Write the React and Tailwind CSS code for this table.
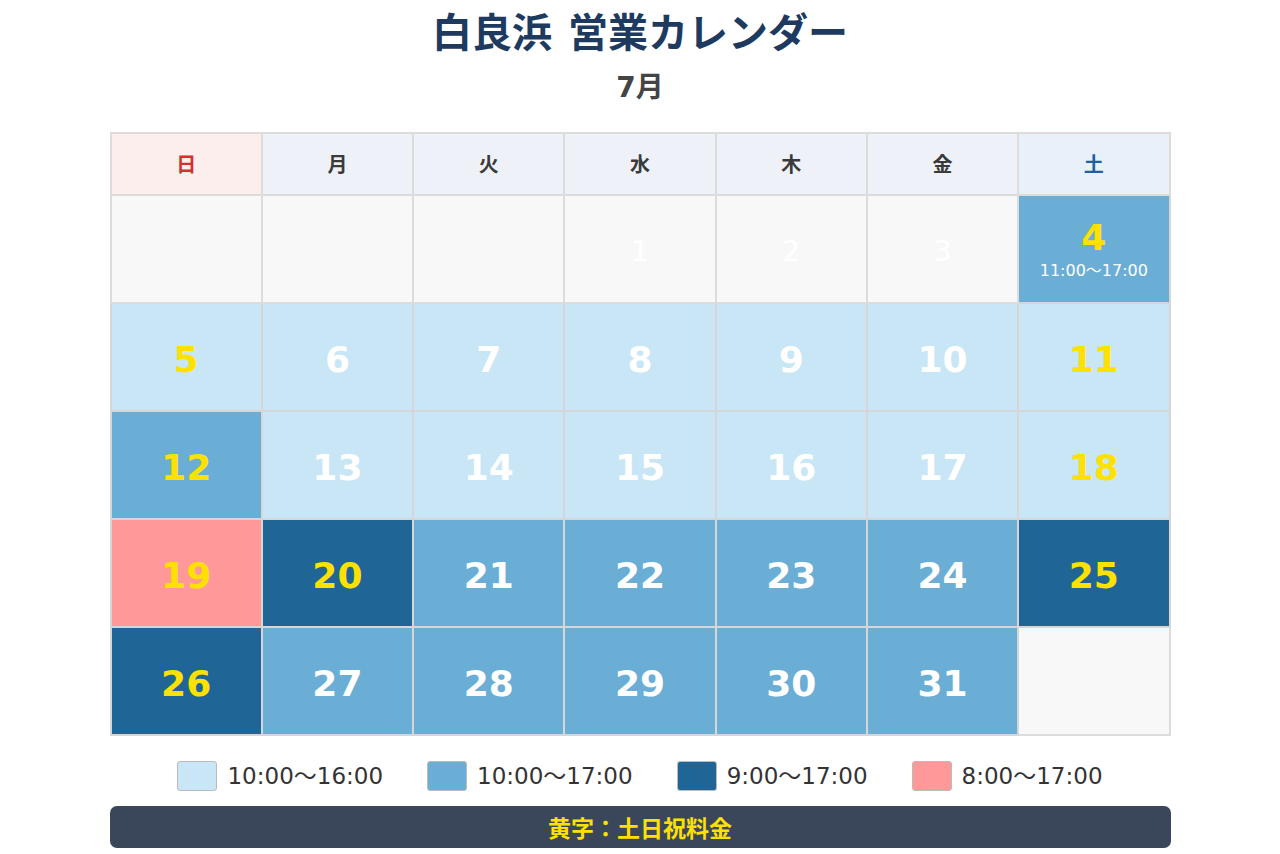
const days = [
  { label: "日", cls: "bg-[#fdeeee] text-[#d0312d]" },
  { label: "月", cls: "bg-[#eef2f8] text-[#3a3a3a]" },
  { label: "火", cls: "bg-[#eef2f8] text-[#3a3a3a]" },
  { label: "水", cls: "bg-[#eef2f8] text-[#3a3a3a]" },
  { label: "木", cls: "bg-[#eef2f8] text-[#3a3a3a]" },
  { label: "金", cls: "bg-[#eef2f8] text-[#3a3a3a]" },
  { label: "土", cls: "bg-[#e8f0fa] text-[#1f5fa6]" },
];

const bg = {
  e: "bg-[#f8f8f8]",
  l: "bg-[#c9e6f6]",
  m: "bg-[#6aaed6]",
  d: "bg-[#1f6696]",
  p: "bg-[#ff9999]",
};

// [day, type, yellow, note]
const weeks = [
  [[null, "e"], [null, "e"], [null, "e"], [1, "e"], [2, "e"], [3, "e"], [4, "m", true, "11:00〜17:00"]],
  [[5, "l", true], [6, "l"], [7, "l"], [8, "l"], [9, "l"], [10, "l"], [11, "l", true]],
  [[12, "m", true], [13, "l"], [14, "l"], [15, "l"], [16, "l"], [17, "l"], [18, "l", true]],
  [[19, "p", true], [20, "d", true], [21, "m"], [22, "m"], [23, "m"], [24, "m"], [25, "d", true]],
  [[26, "d", true], [27, "m"], [28, "m"], [29, "m"], [30, "m"], [31, "m"], [null, "e"]],
];

const legend = [
  { sw: "bg-[#c9e6f6]", text: "10:00〜16:00" },
  { sw: "bg-[#6aaed6]", text: "10:00〜17:00" },
  { sw: "bg-[#1f6696]", text: "9:00〜17:00" },
  { sw: "bg-[#ff9999]", text: "8:00〜17:00" },
];

function Cell({ cell }) {
  const [n, type, yellow, note] = cell;
  if (type === "e") {
    return (
      <td className={`${bg.e} border-2 border-[#dcdcdc] h-[108px] pt-[6px] text-center align-middle`}>
        {n && <span className="text-[28px] text-white">{n}</span>}
      </td>
    );
  }
  return (
    <td className={`${bg[type]} border-2 border-[#d6d6d6] h-[108px] pt-[5px] text-center align-middle`}>
      <div className={`font-bold text-[36px] leading-[40px] ${yellow ? "text-[#ffe100]" : "text-white"} ${note ? "-mt-[6px]" : ""}`}>
        {n}
      </div>
      {note && <div className="text-[16px] leading-[18px] text-white mt-[4px]">{note}</div>}
    </td>
  );
}

export default function App() {
  return (
    <div className="w-[1280px] h-[854px] bg-white pt-[6px] font-['DejaVu_Sans','Noto_Sans_CJK_JP',sans-serif]">
      <h1 className="text-center text-[40px] leading-[48px] font-bold text-[#1e3a5f] [word-spacing:7px] font-['Noto_Sans_CJK_JP',sans-serif]">
        白良浜 営業カレンダー
      </h1>
      <h2 className="text-center text-[28px] leading-[36px] mt-[16px] font-bold text-[#444]">
        7月
      </h2>
      <div className="w-[1061px] mx-auto mt-[26px]">
        <table className="w-full table-fixed border-collapse">
          <thead>
            <tr>
              {days.map((d) => (
                <th
                  key={d.label}
                  className={`${d.cls} h-[62px] border-2 border-[#dcdcdc] text-[20px] font-bold font-['Noto_Sans_CJK_JP',sans-serif]`}
                >
                  {d.label}
                </th>
              ))}
            </tr>
          </thead>
          <tbody>
            {weeks.map((w, i) => (
              <tr key={i}>
                {w.map((c, j) => (
                  <Cell key={j} cell={c} />
                ))}
              </tr>
            ))}
          </tbody>
        </table>
        <div className="flex justify-center gap-[44px] mt-[25px]">
          {legend.map((l) => (
            <div key={l.text} className="flex items-center gap-[10px]">
              <span className={`${l.sw} w-[40px] h-[30px] rounded-[3px] border border-[#bbb] inline-block`} />
              <span className="text-[23px] leading-[30px] text-[#333]">{l.text}</span>
            </div>
          ))}
        </div>
        <div className="mt-[15px] h-[42px] rounded-[7px] bg-[#3a475a] flex items-center justify-center text-[#ffe100] font-bold text-[23px] font-['Noto_Sans_CJK_JP',sans-serif]">
          黄字：土日祝料金
        </div>
      </div>
    </div>
  );
}
